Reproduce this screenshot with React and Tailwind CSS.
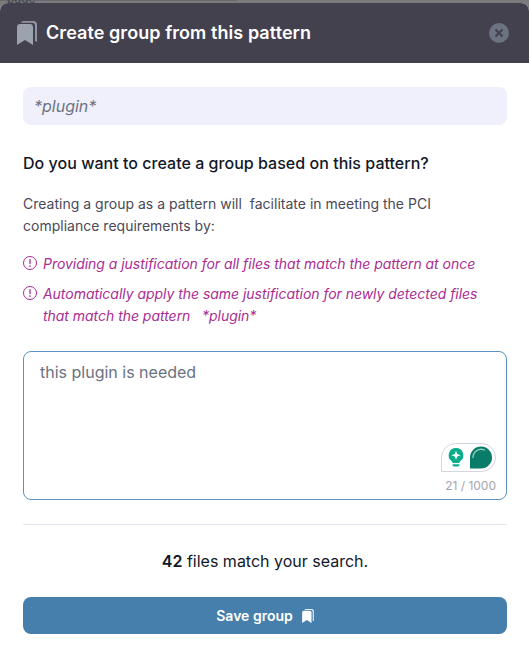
import React, { useState } from "react";

const PATTERN = "*plugin*";
const MAX_LENGTH = 1000;

const BENEFITS = [
  { id: "all", text: "Providing a justification for all files that match the pattern at once" },
  {
    id: "new",
    text: `Automatically apply the same justification for newly detected files that match the pattern\u00a0\u00a0 ${PATTERN}`,
  },
];

// Two stacked bookmarks
const BookmarksIcon = ({ className }) => (
  <svg viewBox="0 0 20 24" fill="none" className={className}>
    <path d="M4 1.8C4.4.7 5.3 0 6.5 0H16.500C18.500 0 20 1.500 20 3.500V21L18 20V5C18 3 16.800 1.800 15 1.800Z" fill="currentColor" opacity="0.85" />
    <path d="M0 6C0 4.300 1.300 3 3 3H13C14.700 3 16 4.300 16 6V24L8 19L0 24Z" fill="currentColor" />
  </svg>
);

const AlertIcon = () => (
  <svg viewBox="0 0 14 14" fill="none" stroke="currentColor" className="mt-[3px] size-3.5 shrink-0">
    <circle cx="7" cy="7" r="6.500" strokeWidth="1" />
    <path d="M7 3.700V7.500" strokeWidth="1.300" strokeLinecap="round" />
    <circle cx="7" cy="10" r="0.850" fill="currentColor" stroke="none" />
  </svg>
);

const CloseIcon = () => (
  <svg viewBox="0 0 20 20" fill="none" className="size-5">
    <circle cx="10" cy="10" r="10" fill="#6b7280" />
    <path d="M7.300 7.300L12.700 12.700M12.700 7.300L7.300 12.700" stroke="#43414e" strokeWidth="2.200" strokeLinecap="square" />
  </svg>
);

// Writing assistant pill in the corner of the textarea
const AssistantWidget = () => (
  <svg viewBox="0 0 55 29" fill="none" className="h-[29px] w-[55px]">
    <path d="M0.500 28.500V14.500A14 14 0 0 1 14.500 0.500H40.500A14 14 0 0 1 40.500 28.500Z" fill="white" stroke="#d5d3e0" />
    <path d="M15 5A7.300 7.300 0 0 0 10.800 18.300L11.700 20H18.300L19.200 18.300A7.300 7.300 0 0 0 15 5Z" fill="#0aae8a" />
    <path d="M15 7.800L16.300 11.100L19.500 12.300L16.300 13.500L15 16.800L13.700 13.500L10.500 12.300L13.700 11.100Z" fill="white" />
    <path d="M11.500 21.300H18.500C18.500 22.800 17.700 23.600 16.500 23.600H13.500C12.300 23.600 11.500 22.800 11.500 21.300Z" fill="#0aae8a" />
    <path d="M29 25.500V14.500A11 11 0 1 1 40 25.500Z" fill="#087b69" />
    <path d="M32 14.500A8.200 8.200 0 0 1 43.500 7" stroke="#8ed0c2" strokeWidth="1.300" strokeLinecap="round" />
  </svg>
);

export default function CreateGroupModal() {
  const [reason, setReason] = useState("this plugin is needed");

  return (
    <div className="h-[645px] w-[529px] overflow-hidden bg-[#7b7b7e] font-['Inter',sans-serif]">
      {/* Page behind the dialog */}
      <div className="relative h-[3px]">
        <div className="h-px w-[237px] bg-[#69696d]" />
        <div className="absolute top-0 left-[7px] h-[3px] w-8 overflow-hidden">
          <span className="absolute bottom-0 left-0 text-xs leading-[9px] text-[#42424a]">page</span>
        </div>
      </div>

      <div className="h-[642px] overflow-hidden rounded-t-lg bg-white">
        <header className="flex h-[60px] items-center bg-[#43414e] pr-5 pl-[17px]">
          <BookmarksIcon className="h-6 w-5 text-[#9ca3af]" />
          <h1 className="ml-[9px] flex-1 text-lg font-semibold tracking-[0.07px] text-white">
            Create group from this pattern
          </h1>
          <button type="button" aria-label="Close">
            <CloseIcon />
          </button>
        </header>

        <main className="flex flex-col pt-6 pr-[22px] pl-[23px]">
          <div className="flex h-[38px] items-center rounded-lg bg-[#f0f0fd] px-[11px] text-base text-[#6b7280] italic">
            {PATTERN}
          </div>

          <h2 className="mt-[26px] text-base leading-6 font-medium tracking-[0.03px] text-[#111827]">
            Do you want to create a group based on this pattern?
          </h2>

          <p className="mt-[18px] w-[440px] text-sm leading-[22px] tracking-[0.01px] whitespace-pre-wrap text-[#4b4957]">
            {"Creating a group as a pattern will  facilitate in meeting the PCI compliance requirements by:"}
          </p>

          <ul className="mt-4 flex flex-col gap-2 text-sm leading-[22px] tracking-[-0.035px] text-[#a92d94] italic">
            {BENEFITS.map((item) => (
              <li key={item.id} className="flex gap-1.5">
                <AlertIcon />
                <span className="w-[445px]">{item.text}</span>
              </li>
            ))}
          </ul>

          <div className="relative mt-6 h-[149px]">
            <textarea
              className="block size-full resize-none rounded-lg border border-[#5a93bd] px-4 py-2 text-base leading-6 text-[#6b7280] outline-none"
              value={reason}
              maxLength={MAX_LENGTH}
              spellCheck={false}
              onChange={(e) => setReason(e.target.value)}
            />
            <div className="absolute right-[11px] bottom-7">
              <AssistantWidget />
            </div>
            <span className="absolute right-[11px] bottom-1.5 text-xs leading-4 text-[#a5a5b0]">
              {reason.length} / {MAX_LENGTH}
            </span>
          </div>

          <hr className="mt-6 border-[#e5e5ef]" />

          <p className="mt-6 text-center text-base leading-6 text-[#111827]">
            <strong className="font-semibold">42</strong> files match your search.
          </p>

          <button
            type="button"
            className="mt-6 flex h-[37px] items-center justify-center gap-[9px] rounded-lg bg-[#477fac] text-sm font-semibold text-white"
          >
            Save group
            <BookmarksIcon className="h-3.5 w-3" />
          </button>
        </main>
      </div>
    </div>
  );
}
